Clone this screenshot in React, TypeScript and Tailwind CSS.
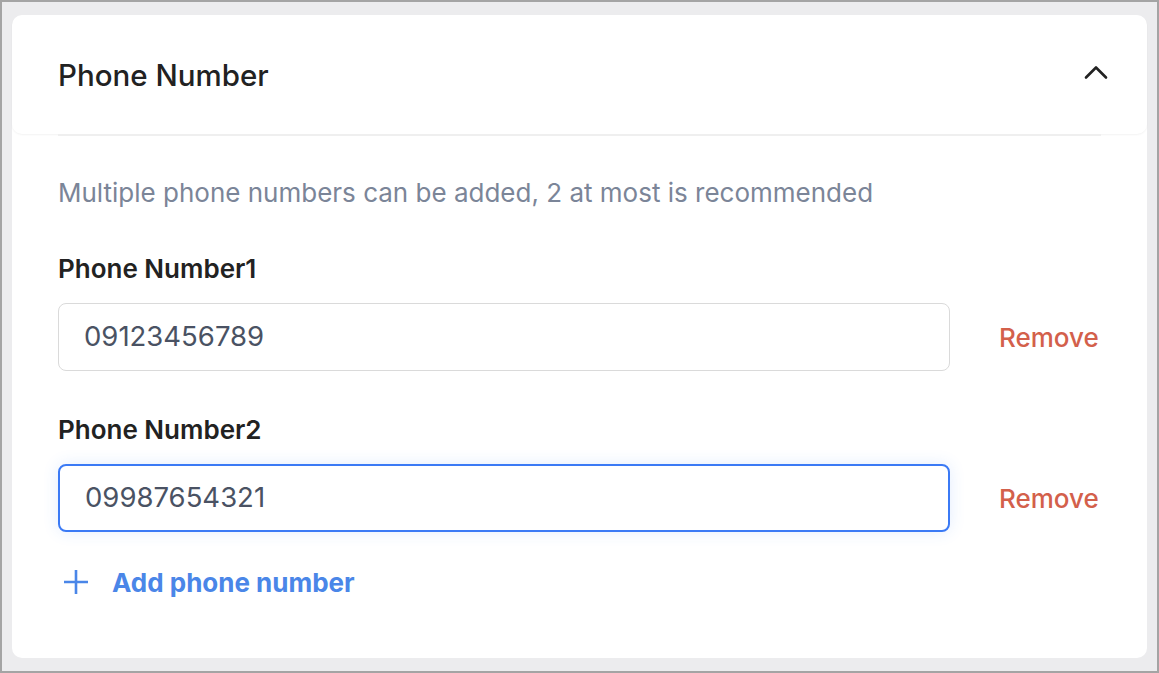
import React from "react";

const phones = [
  { label: "Phone Number1", value: "09123456789", focused: false },
  { label: "Phone Number2", value: "09987654321", focused: true },
];

export default function App() {
  return (
    <div
      className="h-[673px] w-[1159px] border-2 border-[#a4a4a4] bg-[#ececee] pl-[10px] pt-[13px]"
      style={{ fontFamily: "Inter, 'Noto Sans', sans-serif" }}
    >
      <div className="w-[1135px] rounded-[10px] bg-white">
        {/* header */}
        <div className="flex h-[119px] items-center justify-between rounded-[10px] px-[46px] pt-[1px] shadow-[0_1px_2px_rgba(0,0,0,0.05)]">
          <h2 className="text-[29.5px] font-medium text-[#222]">Phone Number</h2>
          <svg width="24" height="24" viewBox="0 0 24 24" fill="none" className="mr-[-7px] mt-[-6px]">
            <path d="M2 17.5 12 7.5l10 10" stroke="#222" strokeWidth="2.6" strokeLinecap="round" strokeLinejoin="round" />
          </svg>
        </div>

        <div className="px-[46px] pb-[60px]">
          <div className="h-[2px] bg-[#efefef]" />
          <p className="mt-[40px] flex h-[32px] items-center text-[26px] text-[#7b8598]">
            Multiple phone numbers can be added, 2 at most is recommended
          </p>

          {phones.map((p, i) => (
            <div key={p.label} className={i === 0 ? "mt-[44px]" : "mt-[42px]"}>
              <div className="flex h-[32px] items-center text-[26px] font-semibold text-[#222]">{p.label}</div>
              <div className="mt-[19px] flex items-center">
                <div
                  className={
                    p.focused
                      ? "flex h-[68px] w-[892px] items-center rounded-[8px] border-2 border-[#3b7af5] pl-[25px] shadow-[0_0_16px_rgba(59,124,246,0.14)]"
                      : "flex h-[68px] w-[892px] items-center rounded-[8px] border-[1.5px] border-[#dadada] pl-[25px]"
                  }
                >
                  <span className="text-[27.5px] text-[#4a5263]">{p.value}</span>
                </div>
                <button className="ml-[49px] text-[26px] font-medium text-[#d3604b]">Remove</button>
              </div>
            </div>
          ))}

          <button className="mt-[34px] flex h-[32px] items-center text-[#4a86e8]">
            <svg width="26" height="26" viewBox="0 0 26 26" fill="none" className="ml-[5px]">
              <path d="M13 1v24M1 13h24" stroke="#4a86e8" strokeWidth="2.6" />
            </svg>
            <span className="ml-[23px] text-[26px] font-bold">Add phone number</span>
          </button>
        </div>
      </div>
    </div>
  );
}
